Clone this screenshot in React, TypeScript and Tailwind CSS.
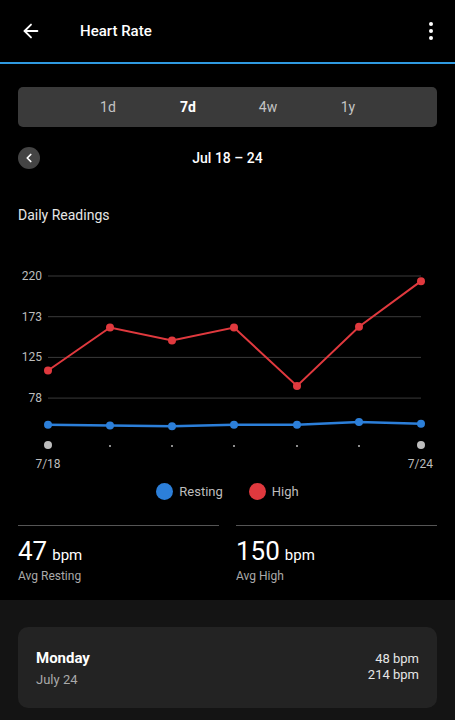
import { ArrowLeft, ChevronLeft } from "lucide-react";

const xs = [48, 110, 172, 234, 297, 359, 421];
const high = [110, 160, 145, 160, 92, 161, 214];
const resting = [47, 46, 45, 47, 47, 50, 48];

// 220 bpm sits at y=13, 78 bpm at y=135 in chart space
const toY = (v: number) => 13 + (220 - v) * (122 / 142);

const ticks = [220, 173, 125, 78];

function Chart() {
  const red = xs.map((x, i) => `${x},${toY(high[i])}`).join(" ");
  const blue = xs.map((x, i) => `${x},${toY(resting[i])}`).join(" ");
  return (
    <svg width="455" height="210" viewBox="0 0 455 210" className="block" style={{ fontFamily: "Roboto, sans-serif" }}>
      {ticks.map((t, i) => {
        const y = 13 + i * 40.7;
        return (
          <g key={t}>
            <line x1="48" x2="421" y1={y} y2={y} stroke="#3a3a3a" strokeWidth="1" />
            <text x="42" y={y + 4} textAnchor="end" fontSize="12" fill="#bdbdbd">
              {t}
            </text>
          </g>
        );
      })}
      <polyline points={red} fill="none" stroke="#e0393e" strokeWidth="2" />
      {xs.map((x, i) => (
        <circle key={`r${i}`} cx={x} cy={toY(high[i])} r="4" fill="#e0393e" />
      ))}
      <polyline points={blue} fill="none" stroke="#2c7fd9" strokeWidth="2.5" />
      {xs.map((x, i) => (
        <circle key={`b${i}`} cx={x} cy={toY(resting[i])} r="4" fill="#2c7fd9" />
      ))}
      {xs.map((x, i) =>
        i === 0 || i === xs.length - 1 ? (
          <circle key={`d${i}`} cx={x} cy="182" r="4" fill="#bdbdbd" />
        ) : (
          <circle key={`d${i}`} cx={x} cy="183" r="1" fill="#bdbdbd" />
        )
      )}
      <text x="48" y="205" textAnchor="middle" fontSize="12" fill="#bdbdbd">
        7/18
      </text>
      <text x="433" y="205" textAnchor="end" fontSize="12" fill="#bdbdbd">
        7/24
      </text>
    </svg>
  );
}

export default function App() {
  return (
    <div className="flex h-[720px] w-[455px] flex-col overflow-hidden bg-black text-white" style={{ fontFamily: "Roboto, 'Noto Sans', sans-serif" }}>
      <header className="flex h-[64px] shrink-0 items-center border-b-2 border-[#2f9ae0]">
        <ArrowLeft size={22} strokeWidth={2} className="ml-[20px] text-white" />
        <h1 className="ml-[38px] flex-1 text-[15px] font-medium">Heart Rate</h1>
        <div className="mr-[22px] flex flex-col items-center gap-[3px]">
          <span className="h-[4px] w-[4px] rounded-full bg-white" />
          <span className="h-[4px] w-[4px] rounded-full bg-white" />
          <span className="h-[4px] w-[4px] rounded-full bg-white" />
        </div>
      </header>

      <div className="mx-[18px] mt-[23px] flex h-[40px] items-center rounded-[5px] bg-[#3a3a3a] pl-[50px] text-[14px]">
        <span className="w-[80px] text-center text-[#c4c4c4]">1d</span>
        <span className="w-[80px] text-center font-bold text-white">7d</span>
        <span className="w-[80px] text-center text-[#c4c4c4]">4w</span>
        <span className="w-[80px] text-center text-[#c4c4c4]">1y</span>
      </div>

      <div className="mx-[18px] mt-[20px] flex h-[22px] items-center">
        <div className="flex h-[22px] w-[22px] items-center justify-center rounded-full bg-[#444]">
          <ChevronLeft size={14} strokeWidth={3} className="text-white" />
        </div>
        <div className="flex-1 text-center text-[14px] font-medium">Jul 18 – 24</div>
        <div className="w-[22px]" />
      </div>

      <h2 className="mx-[18px] mt-[36px] text-[14px] text-[#e6e6e6]">Daily Readings</h2>

      <div className="mt-[37px]">
        <Chart />
      </div>

      <div className="mt-[9px] flex items-center justify-center gap-[6px] text-[13px] text-[#bdbdbd]">
        <span className="h-[17px] w-[17px] rounded-full bg-[#2c7fd9]" />
        <span className="mr-[20px]">Resting</span>
        <span className="h-[17px] w-[17px] rounded-full bg-[#e0393e]" />
        <span>High</span>
      </div>

      <div className="mx-[18px] mt-[23px] grid grid-cols-2 gap-[17px]">
        {[
          { v: "47", l: "Avg Resting" },
          { v: "150", l: "Avg High" },
        ].map((s) => (
          <div key={s.l} className="border-t border-[#555] pt-[12px]">
            <div className="flex items-baseline gap-[5px] leading-none">
              <span className="text-[26px]">{s.v}</span>
              <span className="text-[15px]">bpm</span>
            </div>
            <div className="mt-[3px] text-[12px] text-[#aaa]">{s.l}</div>
          </div>
        ))}
      </div>

      <div className="mt-[15px] flex-1 bg-[#141414] px-[18px] pt-[27px]">
        <div className="flex h-[81px] items-start justify-between rounded-[10px] bg-[#232323] px-[18px]">
          <div className="pt-[21px]">
            <div className="text-[15px] font-bold leading-[20px]">Monday</div>
            <div className="mt-[3px] text-[13px] leading-[18px] text-[#aaa]">July 24</div>
          </div>
          <div className="pt-[24px] text-right text-[13px] leading-[16px] text-[#e6e6e6]">
            <div>48 bpm</div>
            <div>214 bpm</div>
          </div>
        </div>
      </div>
    </div>
  );
}
